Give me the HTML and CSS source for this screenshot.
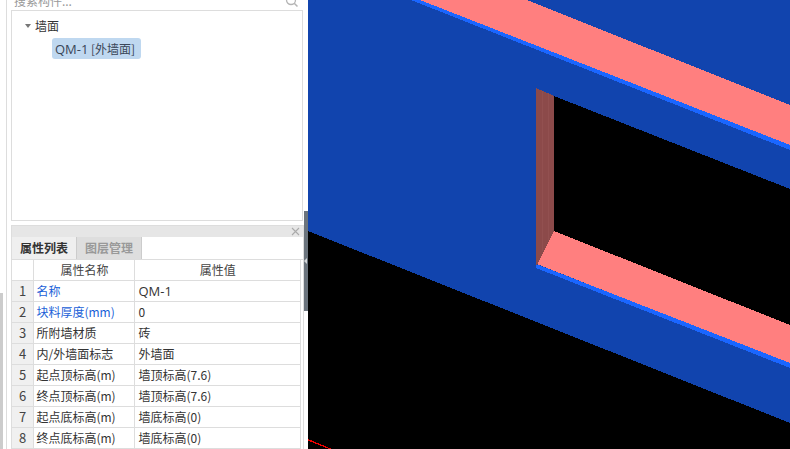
FILE: index.html
```html
<!DOCTYPE html>
<html lang="zh-CN">
<head>
  <meta charset="UTF-8">
  <title>墙面属性</title>
  <link rel="stylesheet" href="styles.css">
</head>
<body>
  <div class="app">
    <div class="sidebar">
      <div class="edge">
        <div class="edge-bar"></div>
      </div>
      <div class="panels">
        <div class="search">
          <span>搜索构件...</span>
          <svg class="search-icon" width="14" height="14" viewBox="0 0 14 14">
            <circle cx="6" cy="5" r="4.5" fill="none" stroke="#b5b5b5" stroke-width="1.3"/>
            <path d="M9.2 8.2 L12.5 11.5" stroke="#b5b5b5" stroke-width="1.5"/>
          </svg>
        </div>
        <div class="tree">
          <div class="tree-root"><span class="caret"></span>墙面</div>
          <div class="tree-leaf"><span class="tree-selected"><span class="code">QM-1</span> [外墙面]</span></div>
        </div>
        <div class="props">
          <div class="props-head">
            <svg width="9" height="9" viewBox="0 0 9 9">
              <path d="M1 1 L8 8 M8 1 L1 8" stroke="#aaa" stroke-width="1.1"/>
            </svg>
          </div>
          <div class="tabs">
            <div class="tab tab-active">属性列表</div>
            <div class="tab">图层管理</div>
          </div>
          <table class="grid">
            <tr class="grid-head"><th class="num"></th><th class="name">属性名称</th><th class="val">属性值</th></tr>
            <tr><td class="num">1</td><td class="name link">名称</td><td class="val"><span class="code">QM-1</span></td></tr>
            <tr><td class="num">2</td><td class="name link">块料厚度(mm)</td><td class="val">0</td></tr>
            <tr><td class="num">3</td><td class="name">所附墙材质</td><td class="val">砖</td></tr>
            <tr><td class="num">4</td><td class="name">内/外墙面标志</td><td class="val">外墙面</td></tr>
            <tr><td class="num">5</td><td class="name">起点顶标高(m)</td><td class="val">墙顶标高(7.6)</td></tr>
            <tr><td class="num">6</td><td class="name">终点顶标高(m)</td><td class="val">墙顶标高(7.6)</td></tr>
            <tr><td class="num">7</td><td class="name">起点底标高(m)</td><td class="val">墙底标高(0)</td></tr>
            <tr><td class="num">8</td><td class="name">终点底标高(m)</td><td class="val">墙底标高(0)</td></tr>
          </table>
        </div>
      </div>
      <div class="splitter">
        <div class="splitter-bar"><span class="splitter-arrow"></span></div>
      </div>
    </div>
    <div class="canvas">
      <svg width="482" height="449" viewBox="308 0 482 449" shape-rendering="crispEdges">
        <!-- wall face -->
        <polygon fill="#1144ae" points="308,0 790,0 790,423 308,231"/>
        <!-- top of wall -->
        <polygon fill="#ff7f7f" points="418,0 527,0 790,105 790,147"/>
        <polygon fill="#1a66ff" points="411,0 420,0 790,145 790,150"/>
        <!-- below upper band -->
        <polygon fill="#000" points="554,96 790,189 790,326 554,231"/>
        <!-- window sill -->
        <polygon fill="#ff7f7f" points="554,231 790,325 790,364 537,264"/>
        <polygon fill="#1a66ff" points="536,264 790,363 790,368 536,268"/>
        <!-- window side -->
        <polygon fill="#8c4a4a" points="536,88 554,96 554,231 537,265 536,265"/>
        <path d="M542 91 V251 M548 93 V240" stroke="#925050" stroke-width="1" fill="none"/>
        <!-- ground -->
        <polygon fill="#000" points="308,231 790,423 790,449 308,449"/>
        <polygon fill="#e00" points="308,439 332,449 329,449 308,440.5"/>
      </svg>
    </div>
  </div>
</body>
</html>
```

FILE: styles.css
```css
* { margin: 0; padding: 0; box-sizing: border-box; }
html, body { width: 100%; height: 100%; overflow: hidden; background: #000; }
body { font-family: "Noto Sans CJK SC", "Liberation Sans", sans-serif; font-size: 12px; color: #333; }

.app { display: flex; width: 790px; height: 449px; }
.sidebar { display: flex; width: 308px; height: 449px; background: #fff; overflow: hidden; }
.canvas { flex: 1; background: #000; }
.canvas svg { display: block; }

.edge { width: 7px; border-right: 1px solid #ddd; display: flex; flex-direction: column; justify-content: flex-end; }
.edge-bar { width: 3px; height: 156px; background: #ccc; }

.panels { width: 297px; margin-left: 4px; display: flex; flex-direction: column; }

.search { height: 10px; padding: 0 5px 0 3px; display: flex; justify-content: space-between; align-items: flex-end; overflow: hidden; color: #999; line-height: 18px; }
.search span { display: block; height: 18px; flex: none; }
.search-icon { flex: none; margin-bottom: 1px; }

.code { font-family: "Open Sans", "Liberation Sans", sans-serif; font-size: 13px; }

.tree { width: 292px; height: 211px; border: 1px solid #ddd; }
.tree-root { height: 18px; margin-top: 6px; padding-left: 13px; line-height: 18px; display: flex; align-items: center; }
.caret { width: 0; height: 0; margin-right: 4px; border-left: 3.5px solid transparent; border-right: 3.5px solid transparent; border-top: 4px solid #777; }
.tree-leaf { margin-top: 3px; padding-left: 40px; }
.tree-selected { display: inline-block; width: 89px; height: 21px; padding-left: 3px; line-height: 21px; background: #bfd8f0; border-radius: 3px; color: #3a4658; white-space: nowrap; }

.props { width: 293px; margin-top: 4px; border-left: 1px solid #ddd; border-right: 1px solid #ddd; border-top: 1px solid #ddd; flex: 1; }
.props-head { height: 11px; background: #e6e6e6; display: flex; justify-content: flex-end; align-items: center; padding-right: 3px; }
.tabs { display: flex; height: 23px; background: #fff; border-bottom: 1px solid #ddd; }
.tab { width: 65px; background: #dedede; color: #999; font-weight: bold; line-height: 22px; text-align: center; font-size: 12px; border-right: 1px solid #ccc; }
.tab-active { background: #efefef; color: #333; }

.grid { width: 289px; border-collapse: collapse; table-layout: fixed; }
.grid th, .grid td { height: 21px; border: 1px solid #ddd; border-top: 0; font-size: 12px; font-weight: normal; line-height: 20px; padding: 0; white-space: nowrap; overflow: hidden; }
.grid tr { height: 21px; }
.grid .num { width: 22px; text-align: center; background: #f0f0f0; font-size: 13px; color: #444; border-left: 0; }
.grid th.num { background: #fff; }
.grid .name { width: 101px; padding-left: 2px; }
.grid .val { padding-left: 3px; font-size: 12px; }
.grid th.name, .grid th.val { text-align: center; padding: 0; }
.grid-head th { color: #444; }
.link { color: #1a5fd8; }

.splitter { width: 4px; margin-left: auto; padding-top: 211px; }
.splitter-bar { width: 4px; height: 100px; background: #6b747d; position: relative; }
.splitter-arrow { position: absolute; left: 0; top: 47px; border-top: 3px solid transparent; border-bottom: 3px solid transparent; border-right: 3px solid #d5d8da; }
```
